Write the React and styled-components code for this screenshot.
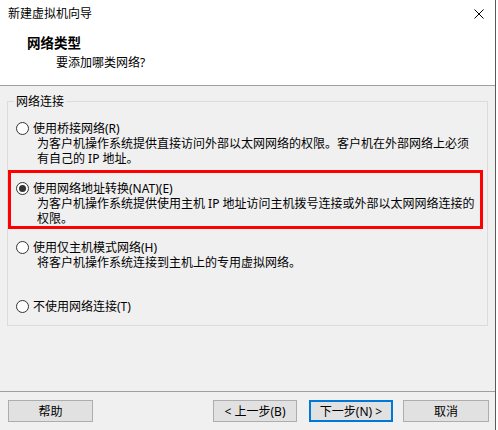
import React from 'react';
import styled, { createGlobalStyle } from 'styled-components';

const GlobalStyle = createGlobalStyle`
  html, body { margin: 0; padding: 0; background: #ffffff; }
  body {
    font-family: 'Noto Sans', 'Noto Sans CJK SC', sans-serif;
    font-size: 12px;
    color: #000;
  }
`;

const Window = styled.div`
  width: 495px;
  height: 430px;
  border-right: 1px solid #5a5a5a;
  display: flex;
  flex-direction: column;
  background: #f0f0f0;
  overflow: hidden;
`;

const TitleBar = styled.div`
  height: 28px;
  flex: none;
  background: #fff;
  display: flex;
  align-items: center;
  justify-content: space-between;
  padding: 0 8px;
  line-height: 28px;
`;

const CloseIcon = styled.svg`
  width: 10px;
  height: 10px;
  margin-right: 3px;
  margin-top: -1px;
`;

const Header = styled.div`
  flex: none;
  background: #fff;
  padding: 6px 0 15px 27px;
  border-bottom: 1px solid #a0a0a0;
`;

const Heading = styled.div`
  font-weight: bold;
  font-size: 13.5px;
  line-height: 18px;
`;

const SubHeading = styled.div`
  margin: 3px 0 0 29px;
  line-height: 15px;
`;

const Body = styled.div`
  flex: 1;
  display: flex;
  flex-direction: column;
  padding: 15px 7px 0 7px;
`;

const Group = styled.div`
  position: relative;
  border: 1px solid #dcdcdc;
  padding: 8px 4px 8px 0;
`;

const Legend = styled.div`
  position: absolute;
  top: -8px;
  left: 6px;
  padding: 0 2px;
  background: #f0f0f0;
  line-height: 15px;
`;

const Option = styled.div`
  margin-top: ${(p) => p.$gap || 0}px;
  border: 3px solid ${(p) => (p.$highlight ? '#ff0000' : 'transparent')};
  padding: 8px 0 0 5px;
`;

const Label = styled.div`
  display: flex;
  align-items: center;
  gap: 4px;
  line-height: 15px;
  white-space: nowrap;
`;

const Radio = styled.span`
  width: 11px;
  height: 11px;
  flex: none;
  border: 1px solid #333;
  border-radius: 50%;
  background: #fff;
  display: flex;
  align-items: center;
  justify-content: center;

  &::after {
    content: '';
    width: 7px;
    height: 7px;
    border-radius: 50%;
    background: ${(p) => (p.$checked ? '#333' : 'transparent')};
  }
`;

const Desc = styled.div`
  padding-left: 21px;
  line-height: 15px;
  white-space: nowrap;
`;

const Spacer = styled.div`
  flex: 1;
`;

const Footer = styled.div`
  flex: none;
  border-top: 1px solid #a0a0a0;
  margin: 0 -7px;
  padding: 8px 6px 8px 8px;
  display: flex;
  align-items: center;
`;

const Button = styled.div`
  width: ${(p) => p.$w || 85}px;
  height: 22px;
  box-sizing: border-box;
  margin-left: ${(p) => p.$ml || 0}px;
  background: #e1e1e1;
  border: ${(p) => (p.$primary ? '2px solid #0078d7' : '1px solid #adadad')};
  display: flex;
  align-items: center;
  justify-content: center;
  line-height: 15px;
  white-space: nowrap;
`;

const options = [
  {
    label: '使用桥接网络(R)',
    lines: ['为客户机操作系统提供直接访问外部以太网网络的权限。客户机在外部网络上必须', '有自己的 IP 地址。'],
    gap: 0,
  },
  {
    label: '使用网络地址转换(NAT)(E)',
    lines: ['为客户机操作系统提供使用主机 IP 地址访问主机拨号连接或外部以太网网络连接的', '权限。'],
    gap: 1,
    checked: true,
  },
  {
    label: '使用仅主机模式网络(H)',
    lines: ['将客户机操作系统连接到主机上的专用虚拟网络。'],
    gap: 0,
  },
  { label: '不使用网络连接(T)', lines: [], gap: 15 },
];

const App = () => (
  <Window>
    <GlobalStyle />
    <TitleBar>
      <span>新建虚拟机向导</span>
      <CloseIcon viewBox="0 0 10 10">
        <path d="M0.5 0.5 L9.5 9.5 M9.5 0.5 L0.5 9.5" stroke="#000" strokeWidth="1" />
      </CloseIcon>
    </TitleBar>
    <Header>
      <Heading>网络类型</Heading>
      <SubHeading>要添加哪类网络?</SubHeading>
    </Header>
    <Body>
      <Group>
        <Legend>网络连接</Legend>
        {options.map((o) => (
          <Option key={o.label} $gap={o.gap} $highlight={o.checked}>
            <Label>
              <Radio $checked={o.checked} />
              {o.label}
            </Label>
            {o.lines.map((l) => (
              <Desc key={l}>{l}</Desc>
            ))}
          </Option>
        ))}
      </Group>
      <Spacer />
      <Footer>
        <Button>帮助</Button>
        <Button $ml={120} $w={84}>&lt; 上一步(B)</Button>
        <Button $ml={12} $w={84} $primary>下一步(N) &gt;</Button>
        <Button $ml={10} $w={86}>取消</Button>
      </Footer>
    </Body>
  </Window>
);

export default App;
